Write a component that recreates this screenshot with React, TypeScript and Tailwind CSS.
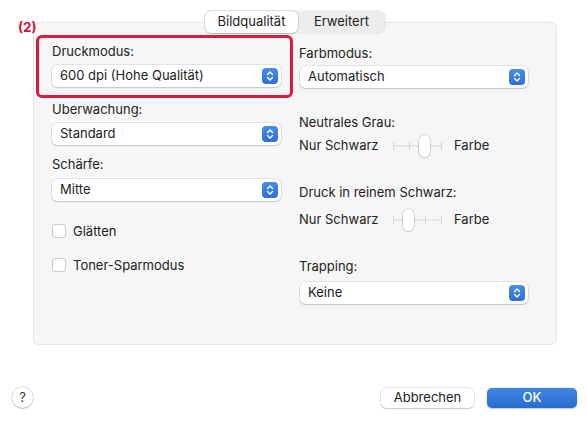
import React from "react";

const font = { fontFamily: "Inter, 'Noto Sans', sans-serif" };

const Stepper = () => (
	<span className="flex h-[16px] w-[16px] items-center justify-center rounded-[4px] bg-gradient-to-b from-[#4b8ee6] to-[#2e6fd2]">
		<svg width="8" height="12" viewBox="0 0 8 12" fill="none">
			<path d="M1.5 4.5 L4 2 L6.5 4.5" stroke="white" strokeWidth="1.4" strokeLinecap="round" strokeLinejoin="round" />
			<path d="M1.5 7.5 L4 10 L6.5 7.5" stroke="white" strokeWidth="1.4" strokeLinecap="round" strokeLinejoin="round" />
		</svg>
	</span>
);

const Select = ({ value, className = "" }: { value: string; className?: string }) => (
	<div
		className={`flex h-[22px] items-center justify-between rounded-[5px] bg-white pl-[8px] pr-[3px] text-[13px] text-[#222] shadow-[0_0_0_0.5px_rgba(0,0,0,0.16),0_1px_1.5px_rgba(0,0,0,0.12)] ${className}`}
	>
		<span>{value}</span>
		<Stepper />
	</div>
);

const Label = ({ text, className = "" }: { text: string; className?: string }) => (
	<div className={`h-4 text-[13px] leading-4 text-[#222] ${className}`}>{text}</div>
);

const Checkbox = ({ label, className = "" }: { label: string; className?: string }) => (
	<div className={`flex h-4 items-center gap-[7px] ${className}`}>
		<span className="h-[14px] w-[14px] rounded-[3px] border border-[#c9c9c9] bg-white" />
		<span className="text-[13px] leading-4 text-[#222]">{label}</span>
	</div>
);

// four-step slider, `step` is the tick index of the thumb
const Slider = ({ step, className = "" }: { step: number; className?: string }) => {
	const ticks = [0, 1, 2, 3];
	return (
		<div className={`flex h-5 items-center text-[13px] text-[#222] ${className}`}>
			<span className="w-[94px]">Nur Schwarz</span>
			<div className="relative h-5 w-[49px]">
				<div className="absolute left-0 right-0 top-[9px] h-[2px] rounded bg-[#e6e6e6]" />
				{ticks.map((t) => (
					<div
						key={t}
						className="absolute top-[6px] h-[8px] w-px bg-[#d6d6d6]"
						style={{ left: t * 16 }}
					/>
				))}
				<div
					className="absolute -top-px h-[22px] w-[11px] rounded-full bg-white shadow-[0_0_0_0.5px_rgba(0,0,0,0.2),0_1px_2px_rgba(0,0,0,0.15)]"
					style={{ left: step * 16 - 6 }}
				/>
			</div>
			<span className="ml-[12px]">Farbe</span>
		</div>
	);
};

export default function App() {
	return (
		<div className="relative flex h-[422px] w-[587px] flex-col bg-white" style={font}>
			{/* callout number */}
			<span className="absolute left-[18px] top-[17px] text-[13.5px] font-bold text-[#d8133b]">(2)</span>

			<div className="flex flex-col pl-[33px] pr-[30px] pt-[11px]">
				<div className="relative z-10 -mb-[11px] flex justify-center">
					<div className="flex h-[22px] rounded-[6px] bg-[#ececec] text-[13px] text-[#222] shadow-[0_0_0_0.5px_rgba(0,0,0,0.1)]">
						<span className="flex w-[93px] items-center justify-center rounded-[6px] bg-white shadow-[0_0_0_0.5px_rgba(0,0,0,0.18),0_1px_1px_rgba(0,0,0,0.1)]">
							Bildqualität
						</span>
						<span className="flex w-[87px] items-center justify-center">Erweitert</span>
					</div>
				</div>

				<div className="flex h-[323px] rounded-[6px] border border-[#e6e6e6] bg-[#f6f6f6] pt-[12px]">
					{/* left column */}
					<div className="ml-[18px] flex w-[229px] flex-col">
						<div className="-ml-[16px] -mr-[12px] flex flex-col rounded-[6px] border-[3px] border-[#dc1a40] pb-[8px] pl-[13px] pr-[9px] pt-[5px]">
							<Label text="Druckmodus:" />
							<Select value="600 dpi (Hohe Qualität)" className="mt-[6px]" />
						</div>
						<Label text="Uberwachung:" className="mt-[3px]" />
						<Select value="Standard" className="mt-[6px]" />
						<Label text="Schärfe:" className="mt-[11px]" />
						<Select value="Mitte" className="mt-[7px]" />
						<Checkbox label="Glätten" className="mt-[22px]" />
						<Checkbox label="Toner-Sparmodus" className="mt-[18px]" />
					</div>

					{/* right column */}
					<div className="ml-[18px] flex w-[229px] flex-col">
						<Label text="Farbmodus:" className="mt-[10px]" />
						<Select value="Automatisch" className="ml-px mt-[5px] w-[228px]" />
						<Label text="Neutrales Grau:" className="mt-[26px]" />
						<Slider step={2} className="mt-[6px]" />
						<Label text="Druck in reinem Schwarz:" className="mt-[28px]" />
						<Slider step={1} className="mt-[10px]" />
						<Label text="Trapping:" className="mt-[28px]" />
						<Select value="Keine" className="ml-px mt-[8px] w-[228px]" />
					</div>
				</div>
			</div>

			<div className="mt-[42px] flex items-center pl-[12px] pr-[10px]">
				<span className="flex h-[21px] w-[21px] items-center justify-center rounded-full bg-white text-[13px] text-[#333] shadow-[0_0_0_0.5px_rgba(0,0,0,0.2),0_1px_1.5px_rgba(0,0,0,0.15)]">
					?
				</span>
				<div className="ml-auto flex gap-[13px]">
					<button className="h-[20px] w-[93px] rounded-[5px] bg-white text-[13px] text-[#222] shadow-[0_0_0_0.5px_rgba(0,0,0,0.18),0_1px_1.5px_rgba(0,0,0,0.14)]">
						Abbrechen
					</button>
					<button className="h-[20px] w-[90px] rounded-[5px] bg-gradient-to-b from-[#3f86e4] to-[#2a6cce] text-[13px] font-medium text-white shadow-[0_0_0_0.5px_rgba(0,0,0,0.15),0_1px_1.5px_rgba(0,0,0,0.15)]">
						OK
					</button>
				</div>
			</div>
		</div>
	);
}
